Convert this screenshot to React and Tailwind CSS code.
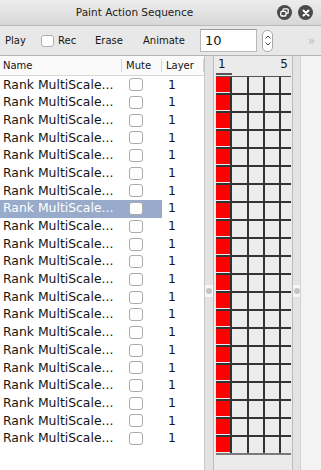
const rows = Array.from({ length: 21 }, (_, i) => i)
const gridCols = ['w-[16px]', 'w-[17px]', 'w-[16px]', 'w-[16px]', 'w-[10px]']

function Grip() {
  return (
    <div className="w-[8px] h-[12px] bg-[#f6f6f6] flex items-center justify-center">
      <div className="w-[6px] h-[6px] rounded-full bg-[#c4c4c4]" />
    </div>
  )
}

export default function App() {
  return (
    <div className="w-[321px] h-[470px] flex flex-col overflow-hidden bg-[#e9e9e9] text-[#151515] font-['DejaVu_Sans',sans-serif]">
      {/* title bar */}
      <div className="h-[26px] flex items-center bg-gradient-to-b from-[#ededed] to-[#d8d8d8] border-b border-[#b9b9b9]">
        <div className="flex-1 text-center text-[10.5px] text-[#222]">Paint Action Sequence</div>
        <div className="flex items-center gap-[6px] pl-[8px] pr-[8px]">
          <div className="w-[15px] h-[15px] rounded-full bg-[#4a4a4a] flex items-center justify-center">
            <svg width="9" height="9" viewBox="0 0 9 9" fill="none" stroke="white" strokeWidth="1.3">
              <rect x="3" y="0.8" width="5.2" height="4.6" rx="1" />
              <rect x="0.8" y="3.4" width="5.2" height="4.6" rx="1" fill="#4a4a4a" />
            </svg>
          </div>
          <div className="w-[15px] h-[15px] rounded-full bg-[#4a4a4a] flex items-center justify-center">
            <svg width="8" height="8" viewBox="0 0 8 8" stroke="white" strokeWidth="2" strokeLinecap="round">
              <path d="M1.5 1.5l5 5M6.5 1.5l-5 5" />
            </svg>
          </div>
        </div>
      </div>

      {/* toolbar */}
      <div className="h-[30px] flex items-center pl-[5px] text-[10px] border-b border-[#b4b4b4] bg-[#e8e8e8]">
        <span className="w-[36px]">Play</span>
        <div className="w-[13px] h-[12px] rounded-[3px] bg-white border border-[#b0b0b0] mr-[4px]" />
        <span className="w-[37px]">Rec</span>
        <span className="w-[48px]">Erase</span>
        <span className="w-[57px]">Animate</span>
        <div className="w-[57px] h-[23px] bg-white border border-[#b8b8b8] border-t-[#9a9a9a] flex items-center pl-[4px] text-[13px]">10</div>
        <div className="ml-[5px] w-[11px] h-[22px] rounded-[5px] bg-white border border-[#a9a9a9] flex flex-col items-center justify-center gap-[3px]">
          <svg width="6" height="4" viewBox="0 0 6 4" fill="none" stroke="#444" strokeWidth="1">
            <path d="M0.5 3.5L3 1l2.5 2.5" />
          </svg>
          <svg width="6" height="4" viewBox="0 0 6 4" fill="none" stroke="#444" strokeWidth="1">
            <path d="M0.5 0.5L3 3l2.5-2.5" />
          </svg>
        </div>
        <div className="flex-1" />
        <span className="mr-[6px] text-[12px] text-[#bdbdbd]">»</span>
      </div>

      {/* main */}
      <div className="flex-1 flex">
        {/* table */}
        <div className="w-[205px] bg-white border-r border-[#c6c6c6] flex flex-col">
          <div className="h-[20px] flex items-center text-[10px] border-b border-[#d6d6d6] bg-[#fafafa]">
            <div className="w-[122px] pl-[3px] flex items-center justify-between">
              <span>Name</span>
              <div className="w-px h-[13px] bg-[#d4d4d4]" />
            </div>
            <div className="w-[40px] pl-[4px] flex items-center justify-between">
              <span>Mute</span>
              <div className="w-px h-[13px] bg-[#d4d4d4]" />
            </div>
            <div className="flex-1 pl-[4px] flex items-center justify-between">
              <span>Layer</span>
              <div className="w-px h-[13px] bg-[#d4d4d4]" />
            </div>
          </div>
          {rows.map((i) => {
            const sel = i === 7
            return (
              <div key={i} className="h-[17.7px] flex items-center text-[12.4px]">
                <div className={`w-[162px] h-full flex items-center ${sel ? 'bg-[#98abcb] text-white' : ''}`}>
                  <span className="w-[122px] pl-[3px] whitespace-nowrap">Rank MultiScale...</span>
                  <div className="ml-[7px] w-[14px] h-[13px] rounded-[3px] bg-white border border-[#ababab]" />
                </div>
                <span className="pl-[6px]">1</span>
              </div>
            )
          })}
        </div>

        {/* left splitter */}
        <div className="w-[9px] bg-[#e3e3e3] border-r border-[#bcbcbc] flex flex-col pt-[229px]">
          <Grip />
        </div>

        {/* grid panel */}
        <div className="w-[78px] bg-[#ebebeb] flex flex-col">
          <div className="h-[20px] flex items-end justify-between px-[4px] pb-[3px] text-[12px] relative">
            <span>1</span>
            <span>5</span>
            <div className="absolute left-[2px] bottom-[1px] w-[16px] h-[2px] bg-[#555]" />
          </div>
          <div className="ml-[2px] w-[75px] border-t border-[#555]">
            {rows.map((i) => (
              <div key={i} className={`h-[18px] flex border-b-2 ${i === 20 ? 'border-[#7a7a7a]' : 'border-[#333]'}`}>
                {gridCols.map((w, c) => (
                  <div key={c} className={`${w} h-full bg-[#ececec] ${c < 4 ? 'border-r-2 border-[#333]' : ''}`}>
                    {c === 0 && <div className="w-[14px] h-[15px] bg-[#ff0000]" />}
                  </div>
                ))}
              </div>
            ))}
          </div>
        </div>

        {/* right splitter */}
        <div className="w-[8px] bg-[#e3e3e3] border-l border-[#bcbcbc] flex flex-col pt-[229px]">
          <Grip />
        </div>
        <div className="flex-1 bg-[#f3f3f3] border-l border-[#d2d2d2]" />
      </div>
    </div>
  )
}
